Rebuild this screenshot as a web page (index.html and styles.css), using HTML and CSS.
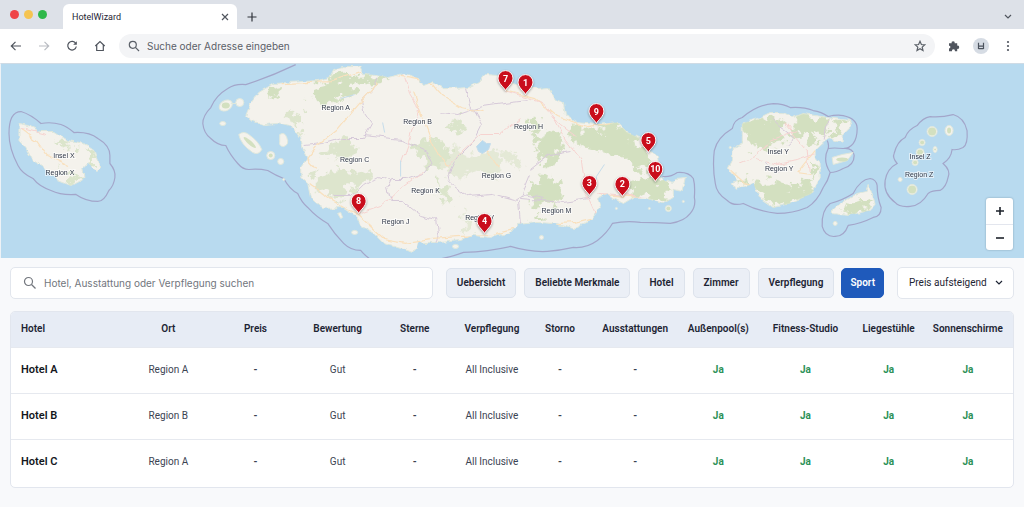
FILE: index.html
```
<!DOCTYPE html>
<html lang="de">
<head>
<meta charset="utf-8">
<title>HotelWizard</title>
<link rel="stylesheet" href="styles.css">
</head>
<body>
<header class="browser">
  <div class="tabstrip">
    <div class="lights"><span class="light red"></span><span class="light yellow"></span><span class="light green"></span></div>
    <div class="tab"><span>HotelWizard</span>
      <button class="icon-btn" aria-label="Tab schließen"><svg width="8" height="8" viewBox="0 0 8 8"><path d="M1 1l6 6M7 1l-6 6"/></svg></button>
    </div>
    <button class="icon-btn new-tab" aria-label="Neuer Tab"><svg width="10" height="10" viewBox="0 0 10 10"><path d="M5 .5v9M.5 5h9"/></svg></button>
    <button class="icon-btn tab-list" aria-label="Tabs anzeigen"><svg width="8" height="6" viewBox="0 0 8 6"><path d="M1 1l3 3 3-3"/></svg></button>
  </div>
  <div class="toolbar">
    <div class="nav">
      <button class="icon-btn" aria-label="Zurück"><svg width="12" height="12" viewBox="0 0 12 12"><path d="M11 6H1.500M5.500 1.800L1.300 6l4.200 4.200"/></svg></button>
      <button class="icon-btn faded" aria-label="Vor"><svg width="12" height="12" viewBox="0 0 12 12"><path d="M1 6h9.500M6.500 1.800L10.700 6l-4.200 4.200"/></svg></button>
      <button class="icon-btn" aria-label="Neu laden"><svg width="12" height="12" viewBox="0 0 12 12"><path d="M9.800 3.600A4.300 4.300 0 1 0 10.300 6.500"/><path d="M10.800 1.200v3.600H7.200z" fill="currentColor" stroke="none"/></svg></button>
      <button class="icon-btn" aria-label="Startseite"><svg width="12" height="12" viewBox="0 0 12 12"><path d="M1.300 6L6 1.500 10.700 6M2.700 5v5.500h6.600V5"/></svg></button>
    </div>
    <label class="address">
      <svg width="12" height="12" viewBox="0 0 12 12"><circle cx="4.800" cy="4.800" r="3.500"/><path d="M7.400 7.400l3.600 3.600"/></svg>
      <input type="text" placeholder="Suche oder Adresse eingeben" aria-label="Adresse">
      <svg width="12" height="12" viewBox="0 0 12 12"><path d="M6 1.300l1.400 3.200 3.400.3-2.600 2.300.8 3.400L6 8.700l-3 1.800.8-3.400L1.200 4.800l3.400-.3z"/></svg>
    </label>
    <button class="icon-btn" aria-label="Erweiterungen"><svg width="12" height="12" viewBox="0 0 12 12"><path d="M1 3.200h2.600a1.600 1.600 0 1 1 3.100 0h2.500v2.500a1.600 1.600 0 1 1 0 3.100v2.400H6.900a1.500 1.500 0 1 0-2.900 0H1V8.500a1.400 1.400 0 1 0 0-2.800z" fill="currentColor" stroke="none"/></svg></button>
    <button class="avatar" aria-label="Profil"><svg width="8" height="8" viewBox="0 0 8 8"><path d="M1.500 .8v6.200M6.500 .8v6.200M1.500 4.200h5M1.500 6.700h5"/></svg></button>
    <button class="icon-btn" aria-label="Menü"><svg width="12" height="12" viewBox="0 0 12 12"><g fill="currentColor" stroke="none"><circle cx="6" cy="2" r="1.100"/><circle cx="6" cy="6" r="1.100"/><circle cx="6" cy="10" r="1.100"/></g></svg></button>
  </div>
</header>

<main>
<section class="map" aria-label="Karte">
<svg class="map-canvas" viewBox="0 63 1024 195" preserveAspectRatio="xMidYMid slice">
  <defs>
    <filter id="coast" x="-5%" y="-5%" width="110%" height="110%">
      <feTurbulence type="fractalNoise" baseFrequency=".14" numOctaves="2" seed="4"/>
      <feDisplacementMap in="SourceGraphic" scale="5" xChannelSelector="R" yChannelSelector="G"/>
    </filter>
    <filter id="wood" x="-10%" y="-10%" width="120%" height="120%">
      <feTurbulence type="fractalNoise" baseFrequency=".1" numOctaves="4" seed="9"/>
      <feDisplacementMap in="SourceGraphic" scale="26" xChannelSelector="R" yChannelSelector="G"/>
      <feGaussianBlur stdDeviation=".5"/>
    </filter>
    <filter id="wiggle" x="-5%" y="-5%" width="110%" height="110%">
      <feTurbulence type="fractalNoise" baseFrequency=".08" numOctaves="2" seed="3"/>
      <feDisplacementMap in="SourceGraphic" scale="7" xChannelSelector="R" yChannelSelector="G"/>
    </filter>
    <filter id="speckle" x="0" y="0" width="100%" height="100%">
      <feTurbulence type="fractalNoise" baseFrequency=".09" numOctaves="4" seed="12"/>
      <feColorMatrix values="0 0 0 0 .83  0 0 0 0 .88  0 0 0 0 .75  0 9 0 0 -5"/>
      <feComposite in2="SourceGraphic" operator="in"/>
    </filter>
    <path id="main-land" d="M245 115L250 103 258 92 273 83 287 82 317 80 328 77 332 69 343 66 358 66 361 73 377 74 387 77 403 73 417 77 423 85 433 81 443 88 453 88 467 87 480 81 485 74 498 75 515 84 537 88 548 87 555 100 563 103 565 115 577 122 597 124 617 122 627 132 640 138 648 150 658 155 659 163 657 176 672 183 676 178 685 177 682 190 673 188 673 197 663 203 647 198 633 197 623 203 613 198 607 193 597 198 600 207 590 220 583 223 573 228 553 223 537 222 517 224 510 232 490 237 473 235 460 240 440 242 418 242 413 252 400 248 383 243 373 233 360 225 355 215 343 207 323 208 310 198 307 183 300 177 300 167 307 157 302 147 300 137 293 127 277 123 263 124 250 120Z"/>
    <path id="x-land" d="M18 123L27 125 40 131 53 131 67 140 83 143 93 150 99 167 95 170 87 163 82 168 83 178 70 185 57 180 42 166 32 160 25 148 18 140Z"/>
    <path id="y-land" d="M742 123L757 118 770 112 783 112 793 117 803 113 827 117 850 120 852 125 842 135 842 142 828 138 815 150 815 157 820 163 820 177 812 193 790 203 773 207 760 198 753 183 735 189 732 183 738 180 728 168 732 160 733 148 742 143Z"/>
    <path id="s-land" d="M868 185L872 193 875 205 870 210 847 215 832 213 835 207 857 193 866 191Z"/>
    <clipPath id="land-clip"><use href="#main-land"/><use href="#x-land"/><use href="#y-land"/><use href="#s-land"/></clipPath>
  </defs>
  <rect x="-500" y="0" width="2024" height="400" fill="#b8daef"/>
  <g class="limit">
    <path d="M295 64Q270 76 245 84Q234 83 227 88Q215 95 210 107Q202 115 202 123Q203 133 210 138Q217 145 225 145Q229 154 237 163Q242 169 248 169Q258 168 267 170Q275 175 283 178Q289 189 297 193Q301 202 307 207Q316 217 327 223Q334 234 343 243Q350 250 360 250Q364 255 370 259"/>
    <path d="M436 259Q450 257 463 252Q488 251 510 246Q530 252 547 251Q560 250 573 247Q586 248 597 240Q607 232 612 223Q626 220 640 222Q655 222 670 223Q684 221 690 213Q696 206 694 197Q695 185 693 178Q688 171 677 172Q670 177 662 176"/>
    <path d="M20 111Q30 114 40 123Q50 121 60 124Q66 126 73 132Q88 131 97 138Q109 145 109 155V163Q115 170 114 177Q113 185 108 190Q103 201 97 201Q85 201 75 194Q60 195 50 190Q38 186 32 178Q21 173 17 165Q8 148 8 133Q8 111 20 111Z"/>
    <path d="M773 103Q783 103 790 107Q803 106 813 110Q821 111 828 116Q836 114 843 115Q857 118 857 128Q857 138 853 143Q849 148 843 148Q833 147 828 148Q829 144 827 140M843 148Q853 147 854 155Q854 165 843 168Q836 172 830 172Q828 180 823 187Q817 201 807 207Q792 213 777 213Q758 211 743 203Q733 206 727 200Q716 193 715 183Q712 167 714 150Q717 137 732 128Q734 119 742 117Q757 104 773 103M828 148Q822 160 830 172"/>
    <path d="M870 178Q876 179 877 185Q877 197 881 207Q881 216 873 217Q861 223 848 225Q844 236 835 236Q825 237 822 226Q821 210 830 203Q842 200 853 193Q860 179 870 178Z"/>
    <path d="M930 116Q941 117 953 114Q964 117 967 130Q968 144 963 147Q957 150 952 149Q951 158 943 163Q951 170 948 177Q946 187 940 190Q932 190 928 193Q921 205 910 206Q899 207 895 202Q883 193 885 180Q887 168 897 163Q892 157 894 153Q897 141 905 137Q908 129 917 125Q923 117 930 116Z"/>
  </g>
  <g class="land">
    <g filter="url(#coast)"><use href="#main-land"/><use href="#x-land"/><use href="#y-land"/><use href="#s-land"/></g>
    <ellipse cx="225" cy="105" rx="7" ry="5" transform="rotate(-30 225 105)"/><circle cx="239" cy="102" r="4"/><path d="M230 103h6"/><ellipse cx="222" cy="123" rx="3" ry="2"/>
    <path d="M238 134Q243 130 248 134Q258 141 261 149Q258 155 252 152Q240 144 238 134Z"/><path d="M279 134Q284 131 286 137Q289 144 283 146Q278 146 279 141Z"/><circle cx="270" cy="155" r="4"/><circle cx="280" cy="161" r="3"/>
    <path d="M337 213l3-1 2 5-2 1z"/><ellipse cx="354" cy="232" rx="3" ry="2"/><circle cx="541" cy="237" r="2"/><ellipse cx="455" cy="246" rx="3" ry="2"/><circle cx="283" cy="179" r="1"/><circle cx="616" cy="208" r="1"/><circle cx="649" cy="208" r="1"/><circle cx="683" cy="201" r="1"/>
    <circle cx="668" cy="208" r="3"/><path d="M832 157L842 154 853 152 847 160 833 164Z"/>
    <circle cx="932" cy="131" r="5"/><ellipse cx="949" cy="130" rx="4" ry="5"/><circle cx="922" cy="142" r="3"/><ellipse cx="935" cy="149" rx="2" ry="3"/><circle cx="920" cy="152" r="4"/><circle cx="915" cy="162" r="3"/><circle cx="912" cy="189" r="5"/><circle cx="900" cy="179" r="2"/><circle cx="835" cy="223" r="2"/><circle cx="730" cy="147" r="1"/>
  </g>
  <g class="islet-wood"><circle cx="932" cy="131" r="4"/><ellipse cx="949" cy="130" rx="2" ry="3"/><circle cx="922" cy="142" r="2"/><circle cx="920" cy="152" r="3"/><circle cx="935" cy="149" r="1"/><circle cx="915" cy="162" r="2"/><circle cx="912" cy="189" r="4"/><ellipse cx="225" cy="105" rx="4" ry="3"/><ellipse cx="249" cy="142" rx="8" ry="2" transform="rotate(42 249 142)"/><circle cx="668" cy="208" r="2"/><ellipse cx="842" cy="159" rx="6" ry="2"/><circle cx="270" cy="155" r="2"/></g>
  <g clip-path="url(#land-clip)">
    <g class="wood" filter="url(#wood)">
      <path d="M266 85l16-3-2 11-12 4zM320 80l28-5 28 0 6 5-26 8-18 12-16 6-12-4 4-10zM366 72l14 2 8 6-16 2z"/>
      <path d="M284 112l12-4 10 14-10 8zM322 148l24-10 12 10-10 10-28-2zM312 176l26-8 22 4 12-4 0 12-22 8-14 10-22-8z" opacity=".7"/>
      <path d="M410 148l24-12 16 16-8 18-16-8zM446 124l12-6 4 10-10 6zM430 178l16 8 8 16-14-2z" opacity=".75"/>
      <path d="M535 136l22-4 8 12-12 20-16-4zM530 118l12 6-4 12-8-4zM530 180l26-4 6 16-4 14-26-2zM532 218l12-4 0 8-10 0z"/>
      <path d="M570 126l20 2 26-4 12 10 14 8 8 18-10 10-18-14-16-4-34-6z"/>
      <path d="M632 182l18-6 22 12-6 12-16 0-18-6z"/>
      <path d="M450 148l24 6 22-2 10 12-14 12-20-6-14 10-16-10zM500 150l16 4 4 14-12-6zM462 216l10-2-2 18-8 2z" opacity=".5"/>
      <path d="M744 124l20-8 16 2 2 22-12 8-28-4zM796 116l30 0 0 16-14 12-18-10zM832 121l14 1-10 12-4 2zM748 182l24-2 20 8 22-12 0 16-14 10-24 6-18-14zM740 178l8 4-6 6zM812 160l7 6-4 12z"/>
      <path d="M840 208l20-10 14 2-2 8-28 6z"/>
      <path d="M52 136l14 6 4 6-12-2zM80 146l14 8 0 10-8-4zM56 170l14 4 10 0-10 10z" opacity=".75"/>
    </g>
    <rect x="0" y="63" width="1024" height="195" filter="url(#speckle)"/>
    <g filter="url(#wiggle)">
    <g class="border">
      <path d="M377 76l-4 12-12 12 2 12 8 12-8 14-22 0-20 6-18 2"/><path d="M363 135l38 4 26 12 5 10-10 12-16 6-16 0-4 8 4 14 12 0 18 14 16 4 2 14-4 16"/><path d="M389 180l-12-4-14 8-12 12-18 0"/><path d="M466 88l4 16 12 20-8 16-18 18-8 16 2 8 18 14 24-2 22 6 10-6 20 4"/><path d="M440 112l18 2 24-8 28-4 18-2"/><path d="M518 200l2 22M530 174l-10 24 42 4 28-4M530 168l18-14 22-4"/><path d="M828 117l-4 22M770 116l10 10 14 10-8 8M780 172l-16-10"/>
    </g>
    <g class="road-y">
      <path d="M280 83l50-2 36-12 30 6 34 6 12 14 20 12 20 4"/><path d="M316 170l-10-12 10-12 20-16 20-24 20-22"/><path d="M308 182l20 16 28 16 26 24 22 4 28-4 60-4 30-8 52-4 34-8"/><path d="M412 92l12 30 14 34 10 10"/><path d="M505 90l30 8 22 18 30 10 24-4"/><path d="M480 140l18 26"/><path d="M640 197l-40-3"/>
      <path d="M815 150l-18 22 14 2M728 168l16 14 10 6 8 14M20 129l16 12 10 14 20 10"/>
    </g>
    <g class="road-r">
      <path d="M403 74l6 20 10 16-10 30-8 22"/><path d="M358 214l22-8 20-18 22-16"/><path d="M448 166l14-16 18-16 20 0 20-16"/><path d="M505 91l40 12 20 36 16 20 4 32 10 22"/><path d="M552 118l24 18M597 193l50 3"/>
      <path d="M740 162l14-6 16-16 26-10M756 158l22 6 18-4 22-8M785 122l12 16 10 12 2 20M20 128l24 6"/>
    </g>
    </g>
    <g class="water"><path d="M476 146l6-6 4 3 4 0-2 6-6 4-4-2z" fill="#b8daef"/><path d="M400 176v-16M384 132l-2-10M340 98l14-4M604 164l-8 12 0 8"/></g>
  </g>
  <g class="labels">
    <text x="335" y="109">Region A</text><text x="417" y="123">Region B</text><text x="354" y="162">Region C</text><text x="528" y="128">Region H</text><text x="425" y="193">Region K</text><text x="496" y="178">Region G</text><text x="395" y="224">Region J</text><text x="479" y="220">Region V</text><text x="556" y="213">Region M</text>
    <text x="63" y="157">Insel X</text><text x="59" y="175">Region X</text><text x="778" y="153">Insel Y</text><text x="779" y="171">Region Y</text><text x="920" y="158">Insel Z</text><text x="919" y="177">Region Z</text>
  </g>
  <defs><path id="pin" d="M0 12C-2 8-7.500 5-7.500-.500A7.500 7.500 0 0 1 7.500-.500C7.500 5 2 8 0 12Z"/></defs>
  <g class="pins">
    <g transform="translate(505 78)"><use href="#pin"/><text y="3">7</text></g>
    <g transform="translate(525 82)"><use href="#pin"/><text y="3">1</text></g>
    <g transform="translate(596 111)"><use href="#pin"/><text y="3">9</text></g>
    <g transform="translate(648 140)"><use href="#pin"/><text y="3">5</text></g>
    <g transform="translate(655 169)"><use href="#pin"/><text y="3">10</text></g>
    <g transform="translate(589 183)"><use href="#pin"/><text y="3">3</text></g>
    <g transform="translate(622 184)"><use href="#pin"/><text y="3">2</text></g>
    <g transform="translate(358 201)"><use href="#pin"/><text y="3">8</text></g>
    <g transform="translate(484 221)"><use href="#pin"/><text y="3">4</text></g>
  </g>
</svg>
<div class="zoom">
  <button aria-label="Vergrößern"><svg width="10" height="10" viewBox="0 0 10 10"><path d="M5 1v8M1 5h8"/></svg></button>
  <button aria-label="Verkleinern"><svg width="10" height="10" viewBox="0 0 10 10"><path d="M1 5h8"/></svg></button>
</div>
</section>

<section class="content">
  <div class="filters">
    <label class="search">
      <svg width="14" height="14" viewBox="0 0 14 14"><circle cx="5.500" cy="5.500" r="4"/><path d="M8.500 8.500l4 4"/></svg>
      <input type="search" placeholder="Hotel, Ausstattung oder Verpflegung suchen" aria-label="Hotelsuche">
    </label>
    <div class="chips">
      <button class="chip">Uebersicht</button><button class="chip">Beliebte Merkmale</button><button class="chip">Hotel</button><button class="chip">Zimmer</button><button class="chip">Verpflegung</button>
    </div>
    <button class="chip active">Sport</button>
    <div class="sort">
      <select aria-label="Sortierung"><option>Preis aufsteigend</option></select>
      <svg width="8" height="6" viewBox="0 0 8 6"><path d="M1 1l3 3 3-3"/></svg>
    </div>
  </div>
  <div class="card">
  <table>
    <colgroup><col class="c-hotel"><col class="c-ort"><col class="c-preis"><col class="c-bewertung"><col class="c-sterne"><col class="c-verpflegung"><col class="c-storno"><col class="c-ausstattung"><col class="c-pool"><col class="c-fitness"><col class="c-liege"><col class="c-schirm"></colgroup>
    <thead><tr><th>Hotel</th><th>Ort</th><th>Preis</th><th>Bewertung</th><th>Sterne</th><th>Verpflegung</th><th>Storno</th><th>Ausstattungen</th><th>Außenpool(s)</th><th>Fitness-Studio</th><th>Liegestühle</th><th>Sonnenschirme</th></tr></thead>
    <tbody>
      <tr><th scope="row">Hotel A</th><td>Region A</td><td class="none">-</td><td>Gut</td><td class="none">-</td><td>All Inclusive</td><td class="none">-</td><td class="none">-</td><td class="yes">Ja</td><td class="yes">Ja</td><td class="yes">Ja</td><td class="yes">Ja</td></tr>
      <tr><th scope="row">Hotel B</th><td>Region B</td><td class="none">-</td><td>Gut</td><td class="none">-</td><td>All Inclusive</td><td class="none">-</td><td class="none">-</td><td class="yes">Ja</td><td class="yes">Ja</td><td class="yes">Ja</td><td class="yes">Ja</td></tr>
      <tr><th scope="row">Hotel C</th><td>Region A</td><td class="none">-</td><td>Gut</td><td class="none">-</td><td>All Inclusive</td><td class="none">-</td><td class="none">-</td><td class="yes">Ja</td><td class="yes">Ja</td><td class="yes">Ja</td><td class="yes">Ja</td></tr>
    </tbody>
  </table>
  </div>
</section>
</main>
</body>
</html>
```
FILE: styles.css
```
* { box-sizing: border-box; }
body {
  margin: 0;
  min-height: 100vh;
  background: #f8f9fb;
  color: #1d2433;
  font: 10px/14px Roboto, "Liberation Sans", Arial, sans-serif;
}
button, input, select { font: inherit; color: inherit; }
button { cursor: pointer; }
svg { fill: none; stroke: currentColor; stroke-width: 1.2; flex: none; }

/* browser frame */
.tabstrip { display: flex; align-items: center; height: 29px; padding: 4px 10px 0; background: #dde1e8; }
.lights { display: flex; gap: 5px; width: 53px; padding-bottom: 4px; }
.light { width: 9px; height: 9px; border-radius: 50%; }
.red { background: #ef4548; }
.yellow { background: #f5c451; }
.green { background: #2fb84a; }
.tab {
  display: flex; align-items: center; justify-content: space-between;
  width: 174px; height: 25px; padding: 0 6px 0 9px;
  background: #fff; border-radius: 6px 6px 0 0;
  font-size: 9px;
}
.icon-btn { display: grid; place-items: center; width: 12px; height: 12px; padding: 0; border: 0; background: none; color: #50555e; }
.new-tab { margin-left: 9px; color: #30343b; }
.tab-list { margin-left: auto; }
.toolbar { display: flex; align-items: center; gap: 13px; height: 34px; padding: 0 10px; background: #fff; }
.nav { display: flex; gap: 16px; }
.faded { color: #b9bcc2; }
.address {
  display: flex; flex: 1; align-items: center; gap: 7px;
  height: 24px; padding: 0 9px;
  background: #f3f4f6; border-radius: 12px; color: #5b6068;
}
.address input { flex: 1; min-width: 0; padding: 0; border: 0; background: none; outline: 0; }
input::placeholder { color: inherit; opacity: 1; }
.address input, .search input { font: 10px Inter, "Liberation Sans", sans-serif; }
.avatar { display: grid; place-items: center; width: 16px; height: 16px; padding: 0; border: 0; border-radius: 50%; background: #d6dce4; color: #4c535e; }

/* map */
.map { position: relative; height: 195px; border-top: 1px solid #cfdbe5; border-left: 1px solid #eef2f6; overflow: hidden; }
.map-canvas { display: block; width: 100%; height: 100%; stroke: none; }
.limit { fill: none; stroke: #a3a6ca; stroke-width: 1.2; }
.land { fill: #f4f2ec; stroke: #e0e8dc; stroke-width: 1; }
.wood, .islet-wood { fill: #d3e0c0; }
.border { fill: none; stroke: #d6c9d9; stroke-width: 1; }
.road-y { fill: none; stroke: #f9e0bd; stroke-width: 1.2; }
.road-r { fill: none; stroke: #f6d3d0; stroke-width: 1; }
.water { fill: none; stroke: #c5dcea; stroke-width: 1; }
.labels text { fill: #2f3747; stroke: #fff; stroke-opacity: .6; stroke-width: 2; paint-order: stroke; font-size: 7px; text-anchor: middle; font-family: "Liberation Sans", Arial, sans-serif; }
.pins { filter: drop-shadow(0 1px 1px rgba(0, 0, 0, .35)); }
.pins use { fill: #c90d1c; stroke: #fff; stroke-width: 1; }
.pins text { fill: #fff; font-size: 9px; font-weight: 700; text-anchor: middle; }
.zoom {
  position: absolute; right: 11px; bottom: 8px;
  display: flex; flex-direction: column; width: 27px;
  background: #fff; border-radius: 3px; box-shadow: 0 0 2px rgba(40, 60, 80, .4);
}
.zoom button { display: grid; place-items: center; height: 26px; padding: 0; border: 0; background: none; color: #1d222b; }
.zoom button + button { border-top: 1px solid #e3e6ee; }
.zoom svg { stroke-width: 1.6; }

/* filters */
.content { padding: 9px 10px 20px; }
.filters { display: flex; align-items: center; height: 32px; }
.search, .sort { background: #fff; border: 1px solid #e2e6ed; border-radius: 5px; }
.search { display: flex; flex: 1; align-items: center; gap: 7px; height: 32px; padding: 0 12px; color: #72767d; }
.search input { flex: 1; min-width: 0; padding: 0; border: 0; background: none; outline: 0; }
.chips { display: flex; gap: 8px; margin: 0 7px 0 13px; }
.chip { height: 30px; padding: 0 10px; border: 1px solid #dde3ec; border-radius: 5px; background: #ebeff6; font-weight: 600; white-space: nowrap; }
.active { background: #1f5abb; border-color: #1f5abb; color: #fff; padding: 0 8px; }
.sort { position: relative; display: flex; align-items: center; width: 117px; height: 32px; margin-left: 13px; }
.sort select { width: 100%; height: 100%; padding: 0 24px 0 11px; border: 0; background: none; appearance: none; }
.sort svg { position: absolute; right: 10px; pointer-events: none; }

/* results */
.card { margin-top: 12px; border: 1px solid #e2e6ee; border-radius: 5px; overflow: hidden; background: #fff; }
table { width: 100%; table-layout: fixed; border-collapse: collapse; }
th, td { padding: 0; text-align: center; white-space: nowrap; }
thead th { height: 35px; background: #e7ecf5; font-weight: 600; }
tbody th, tbody td { height: 46px; border-top: 1px solid #e6e9ef; }
tbody td { padding-bottom: 1px; }
tbody tr:last-child > * { height: 48px; padding-bottom: 3px; }
th:first-child { padding-left: 10px; text-align: left; }
tbody th { font-size: 11px; font-weight: 600; color: #14171d; }
td { color: #3b4352; }
.none { font-weight: 700; }
.yes { color: #2c9157; font-weight: 700; }
.c-hotel { width: 11.4%; }
.c-ort { width: 8.6%; }
.c-preis { width: 8.8%; }
.c-bewertung { width: 7.6%; }
.c-sterne { width: 7.8%; }
.c-verpflegung { width: 7.6%; }
.c-storno { width: 6%; }
.c-ausstattung { width: 9%; }
.c-pool { width: 7.6%; }
.c-fitness { width: 9.8%; }
.c-liege { width: 6.8%; }
.c-schirm { width: 9%; }
```
